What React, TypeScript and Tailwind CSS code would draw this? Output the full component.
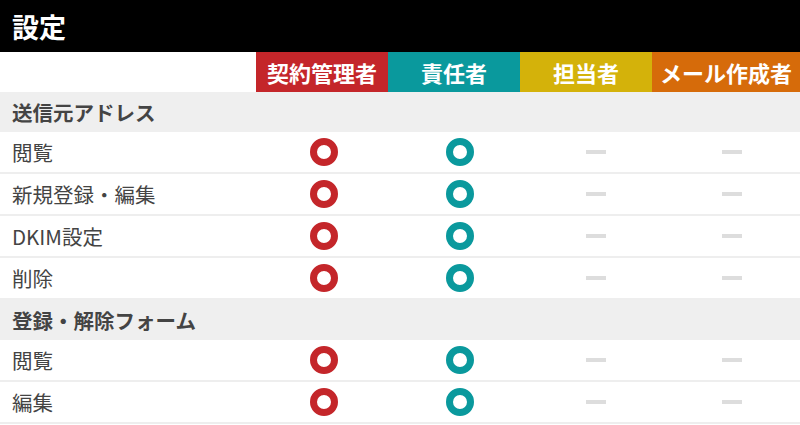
import React from "react";

type Mark = "red" | "teal" | "none";

const font = {
  fontFamily: '"Noto Sans CJK JP", "Noto Sans", sans-serif',
};

const roles = [
  { name: "契約管理者", cls: "bg-[#c4262a] w-[132px]" },
  { name: "責任者", cls: "bg-[#0a999d] w-[132px]" },
  { name: "担当者", cls: "bg-[#d4b20a] w-[132px]" },
  { name: "メール作成者", cls: "bg-[#d66b0a] w-[148px]" },
];

const sections: { title: string; rows: string[] }[] = [
  {
    title: "送信元アドレス",
    rows: ["閲覧", "新規登録・編集", "DKIM設定", "削除"],
  },
  {
    title: "登録・解除フォーム",
    rows: ["閲覧", "編集"],
  },
];

const Cell = ({ mark }: { mark: Mark }) => (
  <div className="w-[136px] flex items-center justify-center">
    {mark === "red" && (
      <div className="w-[28px] h-[28px] rounded-full border-[7px] border-[#c4262a]" />
    )}
    {mark === "teal" && (
      <div className="w-[28px] h-[28px] rounded-full border-[7px] border-[#0a999d]" />
    )}
    {mark === "none" && <div className="w-[20px] h-[4px] bg-[#dddddd]" />}
  </div>
);

const App = () => {
  return (
    <div className="w-[800px] h-[425px] bg-white overflow-hidden" style={font}>
      <div className="h-[52px] bg-black flex items-center px-3">
        <h1 className="text-[27px] font-bold text-white leading-none">設定</h1>
      </div>
      <div className="flex h-[40px]">
        <div className="w-[256px]"></div>
        {roles.map((r) => (
          <div
            key={r.name}
            className={`${r.cls} flex items-center justify-center text-white font-bold text-[22px]`}
          >
            {r.name}
          </div>
        ))}
      </div>
      {sections.map((s) => (
        <div key={s.title}>
          <div className="h-[40px] bg-[#efefef] flex items-center px-3 text-[20.5px] font-bold text-[#444]">
            {s.title}
          </div>
          {s.rows.map((row) => (
            <div
              key={row}
              className="flex h-[42px] border-b-2 border-[#eeeeee]"
            >
              <div className="w-[256px] flex items-center px-3 text-[20.5px] text-[#444]">
                {row}
              </div>
              <Cell mark="red" />
              <Cell mark="teal" />
              <Cell mark="none" />
              <Cell mark="none" />
            </div>
          ))}
        </div>
      ))}
    </div>
  );
};

export default App;
